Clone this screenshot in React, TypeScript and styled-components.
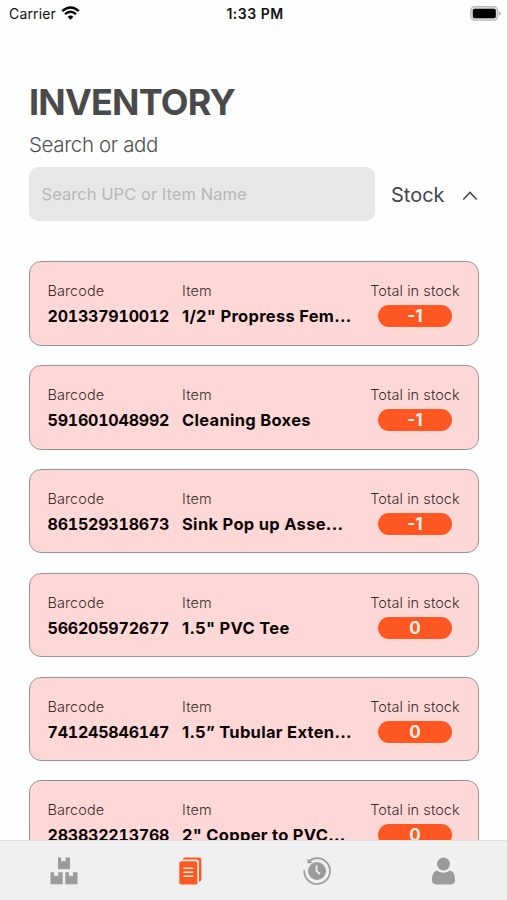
import React from "react";
import styled, { createGlobalStyle } from "styled-components";

const GlobalStyle = createGlobalStyle`
  * { box-sizing: border-box; }
  html, body { margin: 0; padding: 0; background: #fefefe; }
  body { font-family: Inter, "Liberation Sans", sans-serif; overflow: hidden; }
`;

const Screen = styled.div`
  width: 507px;
  height: 900px;
  display: flex;
  flex-direction: column;
  overflow: hidden;
`;

const StatusBar = styled.header`
  flex: none;
  height: 28px;
  padding: 0 6px 0 9px;
  display: grid;
  grid-template-columns: 1fr auto 1fr;
  align-items: center;
  color: #111;
`;

const Carrier = styled.div`
  display: flex;
  align-items: center;
  gap: 5px;
  font-size: 14px;
  line-height: 28px;
  letter-spacing: 0.15px;

  svg { margin-top: -2px; }
`;

const Clock = styled.div`
  font-size: 14px;
  line-height: 28px;
  font-weight: 600;
  letter-spacing: 0.5px;
`;

const Battery = styled.div`
  display: flex;
  justify-content: flex-end;
  margin-top: -2px;
`;

const Content = styled.main`
  flex: 1;
  min-height: 0;
  display: flex;
  flex-direction: column;
  padding: 51px 28px 0 29px;
  overflow: hidden;
`;

const Title = styled.h1`
  flex: none;
  margin: 0;
  height: 46px;
  font-size: 36px;
  line-height: 46px;
  font-weight: 700;
  letter-spacing: -0.8px;
  color: #4a4a4a;
`;

const Subtitle = styled.p`
  flex: none;
  margin: 6px 0 9px;
  font-size: 20.5px;
  line-height: 27px;
  font-weight: 300;
  letter-spacing: -0.37px;
  color: #505050;
`;

const SearchRow = styled.div`
  flex: none;
  display: flex;
  align-items: center;
  height: 54px;
`;

const SearchInput = styled.input`
  width: 346px;
  height: 54px;
  padding: 0 12.5px;
  border: 0;
  border-radius: 9px;
  background: #e7e7e7;
  font: 400 16.5px Inter, sans-serif;
  letter-spacing: 0.05px;
  outline: none;
  &::placeholder { color: #b7b7b7; opacity: 1; }
`;

const SortButton = styled.button`
  flex: 1;
  display: flex;
  align-items: center;
  justify-content: space-between;
  padding: 2px 1px 0 16px;
  border: 0;
  background: none;
  color: #444;
  font: 400 20px/28px Inter, sans-serif;
`;

const List = styled.section`
  margin-top: 40.4px;
  display: flex;
  flex-direction: column;
  gap: 19.3px;
`;

const Card = styled.article`
  flex: none;
  height: 84.5px;
  display: grid;
  grid-template-columns: 134.5px 1fr 92px;
  padding: 19px 17px 0 17.5px;
  border: 1px solid #9d9392;
  border-radius: 12px;
  background: #fed8d6;
`;

const Field = styled.div<{ $center?: boolean }>`
  min-width: 0;
  display: flex;
  flex-direction: column;
  align-items: ${(p) => (p.$center ? "center" : "flex-start")};
`;

const Label = styled.span`
  font-size: 14.5px;
  line-height: 20px;
  font-weight: 300;
  letter-spacing: 0.07px;
  color: #3a2c2c;
  white-space: nowrap;
`;

const Value = styled.span<{ $digits?: boolean }>`
  margin-top: 4px;
  font-size: ${(p) => (p.$digits ? 16 : 16.5)}px;
  line-height: 22px;
  font-weight: 700;
  font-variant-numeric: ${(p) => (p.$digits ? "tabular-nums" : "normal")};
  letter-spacing: ${(p) => (p.$digits ? -0.2 : 0.3)}px;
  color: #0b0606;
  white-space: nowrap;
`;

const Pill = styled.span`
  margin-top: 4px;
  width: 74px;
  height: 22px;
  border-radius: 11px;
  background: #fe5722;
  color: #fff0e9;
  font-size: 17px;
  line-height: 22px;
  font-weight: 700;
  text-align: center;
`;

const TabBar = styled.nav`
  flex: none;
  height: 60px;
  display: grid;
  grid-template-columns: repeat(4, 1fr);
  border-top: 1px solid #dedede;
  background: #f0f0f0;
`;

const Tab = styled.button<{ $active?: boolean }>`
  display: flex;
  align-items: center;
  justify-content: center;
  padding: 0 0 0 1px;
  border: 0;
  background: none;
  color: ${(p) => (p.$active ? "#fe5722" : "#9b9b9b")};
`;

const items = [
  { code: "201337910012", name: '1/2" Propress Fem...', stock: "-1" },
  { code: "591601048992", name: "Cleaning Boxes", stock: "-1" },
  { code: "861529318673", name: "Sink Pop up Asse...", stock: "-1" },
  { code: "566205972677", name: '1.5" PVC Tee', stock: "0" },
  { code: "741245846147", name: "1.5” Tubular Exten...", stock: "0" },
  { code: "283832213768", name: '2" Copper to PVC...', stock: "0" },
];

const WifiIcon = () => (
  <svg width="19" height="14" viewBox="0 0 19 14" fill="none">
    <path d="M1.2 5.2Q9.5-2.3 17.8 5.2" stroke="#000" strokeWidth="2.4" />
    <path d="M4 8.2Q9.5 3.4 15 8.2" stroke="#000" strokeWidth="2.3" />
    <path d="M6.6 10.8Q9.5 8.4 12.4 10.8L9.5 13.8Z" fill="#000" />
  </svg>
);

const BatteryIcon = () => (
  <svg width="31" height="15" viewBox="0 0 31 15">
    <rect x="0.7" y="0.7" width="27" height="13.4" rx="3.8" fill="#dedede" stroke="#b9b9b9" strokeWidth="1.2" />
    <rect x="2.8" y="2.8" width="23" height="9.4" rx="1.8" fill="#000" />
    <path d="M28.8 5.2Q30.8 6 30.8 7.5T28.8 9.8Z" fill="#b5b5b5" />
  </svg>
);

const ChevronUp = () => (
  <svg width="16" height="11" viewBox="0 0 16 11" fill="none">
    <path d="M1.3 9.4L8 2.4L14.7 9.4" stroke="#444" strokeWidth="1.5" />
  </svg>
);

const BoxesIcon = () => (
  <svg width="28" height="28" viewBox="0 0 28 28" fill="currentColor">
    <path d="M8 .5H11.3V4.7L13.4 3.8L15.5 4.7V.5H20V12.2H8Z" />
    <path d="M.5 15.2H4.2V19.3L6.2 18.4L8.2 19.3V15.2H12.7V27.2H.5Z" />
    <path d="M15.3 15.2H19V19.3L21 18.4L23 19.3V15.2H27.5V27.2H15.3Z" />
  </svg>
);

const PagesIcon = () => (
  <svg width="24" height="28" viewBox="0 0 24 28">
    <path d="M3.6 2.6Q4 .5 6 .5H19.8Q22.4.5 22.4 3V22.8Q22.4 24.8 20 24.8V5.5Q20 2.6 17.2 2.6Z" fill="currentColor" />
    <path d="M.3 6.6Q.3 4.3 2.5 4.3H16.1Q18.3 4.3 18.3 6.6V27.5H2.3Q.3 27.5.3 25.5Z" fill="currentColor" />
    <path d="M4.5 11.3H14.3M4.5 15.3H14.3M4.5 19.3H14.3" stroke="#ffe9df" strokeWidth="1.5" />
  </svg>
);

const HistoryIcon = () => (
  <svg width="28" height="28" viewBox="0 0 28 28" fill="none">
    <path d="M1.2 13.2C.8 20.5 6.6 27 14 27C21.2 27 27 21.2 27 14C27 6.8 21.2 1.2 14 1.2C11 1.2 8.2 2.3 6.2 4" stroke="currentColor" strokeWidth="1.7" />
    <path d="M4.3 1.8L4.8 6.5L9.8 5.7Z" fill="currentColor" />
    <circle cx="14" cy="14" r="9" fill="currentColor" />
    <path d="M13.6 8.4V14.2L17 17" stroke="#f0f0f0" strokeWidth="1.8" />
  </svg>
);

const PersonIcon = () => (
  <svg width="24" height="28" viewBox="0 0 24 28" fill="currentColor">
    <circle cx="11.5" cy="7" r="6.5" />
    <path d="M5 13.4Q11.5 18.2 18 13.4C21.5 14.2 23 18 23 22.8Q23 27.4 18.8 27.4H4.2Q0 27.4 0 22.8C0 18 1.5 14.2 5 13.4Z" />
  </svg>
);

export default function App() {
  return (
    <Screen>
      <GlobalStyle />
      <StatusBar>
        <Carrier>Carrier<WifiIcon /></Carrier>
        <Clock>1:33 PM</Clock>
        <Battery><BatteryIcon /></Battery>
      </StatusBar>
      <Content>
        <Title>INVENTORY</Title>
        <Subtitle>Search or add</Subtitle>
        <SearchRow>
          <SearchInput placeholder="Search UPC or Item Name" />
          <SortButton>Stock<ChevronUp /></SortButton>
        </SearchRow>
        <List>
          {items.map((item) => (
            <Card key={item.code}>
              <Field>
                <Label>Barcode</Label>
                <Value $digits>{item.code}</Value>
              </Field>
              <Field>
                <Label>Item</Label>
                <Value>{item.name}</Value>
              </Field>
              <Field $center>
                <Label>Total in stock</Label>
                <Pill>{item.stock}</Pill>
              </Field>
            </Card>
          ))}
        </List>
      </Content>
      <TabBar>
        <Tab aria-label="Stock"><BoxesIcon /></Tab>
        <Tab aria-label="Inventory" $active><PagesIcon /></Tab>
        <Tab aria-label="History"><HistoryIcon /></Tab>
        <Tab aria-label="Profile"><PersonIcon /></Tab>
      </TabBar>
    </Screen>
  );
}
